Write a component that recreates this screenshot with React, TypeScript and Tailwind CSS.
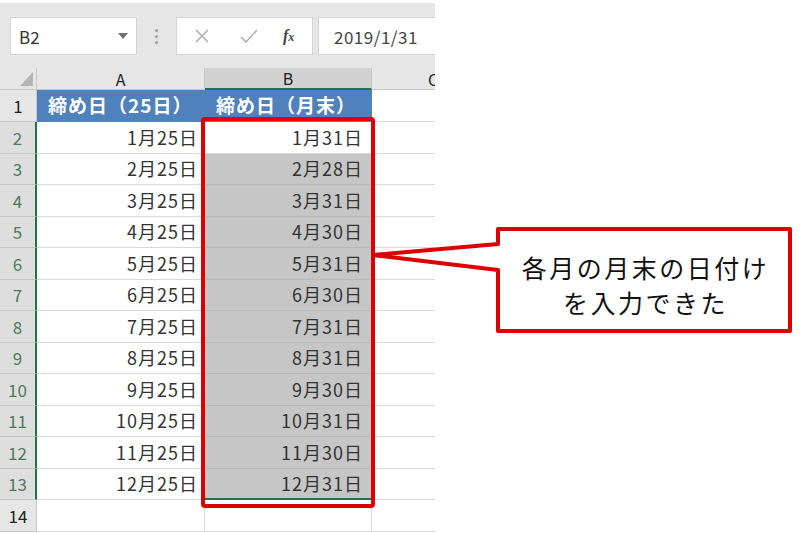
import React from "react";

const FONT = { fontFamily: '"Noto Sans CJK JP", "Noto Sans", sans-serif' };

const rowsA = ["1月25日","2月25日","3月25日","4月25日","5月25日","6月25日","7月25日","8月25日","9月25日","10月25日","11月25日","12月25日"];
const rowsB = ["1月31日","2月28日","3月31日","4月30日","5月31日","6月30日","7月31日","8月31日","9月30日","10月31日","11月30日","12月31日"];

export default function App() {
  return (
    <div className="relative w-[800px] h-[533px] overflow-hidden bg-white" style={FONT}>
      <div className="w-[435px] h-full flex flex-col">
        {/* toolbar */}
        <div className="h-[68px] bg-[#e6e6e6] border-t-[3px] border-white flex items-start pt-[14px] shrink-0">
          <div className="ml-[10px] w-[127px] h-[38px] bg-white border border-[#d4d4d4] flex items-center justify-between pl-[8px] pr-[8px]">
            <span className="text-[17px] text-[#333] leading-none">B2</span>
            <svg width="10" height="6" viewBox="0 0 10 6"><path d="M0 0 L10 0 L5 6 Z" fill="#707070" /></svg>
          </div>
          <div className="w-[39px] h-[38px] flex flex-col items-center justify-center gap-[3px]">
            <span className="w-[3px] h-[3px] rounded-full bg-[#a0a0a0]" />
            <span className="w-[3px] h-[3px] rounded-full bg-[#a0a0a0]" />
            <span className="w-[3px] h-[3px] rounded-full bg-[#a0a0a0]" />
          </div>
          <div className="w-[137px] h-[38px] bg-white border border-[#d4d4d4] flex items-center">
            <svg className="ml-[18px]" width="14" height="14" viewBox="0 0 14 14"><path d="M1 1 L13 13 M13 1 L1 13" stroke="#b0b0b0" strokeWidth="1.6" /></svg>
            <svg className="ml-[31px]" width="18" height="14" viewBox="0 0 18 14"><path d="M1 8 L6 13 L17 1" stroke="#b0b0b0" strokeWidth="1.6" fill="none" /></svg>
            <span className="ml-[25px] text-[16px] italic font-bold text-[#444] leading-none" style={{ fontFamily: '"Liberation Serif", serif' }}>f<span className="text-[12px]">x</span></span>
          </div>
          <div className="ml-[5px] flex-1 h-[38px] bg-white border border-r-0 border-[#d4d4d4] flex items-center pl-[15px]">
            <span className="text-[17px] text-[#444] leading-none tracking-[0.5px]">2019/1/31</span>
          </div>
        </div>
        {/* column headers */}
        <div className="h-[22px] flex shrink-0 text-[16px] text-[#222] leading-none">
          <div className="w-[37px] bg-[#e6e6e6] border-r border-b border-[#c8c8c8] flex items-end justify-end pr-[3px] pb-[3px]">
            <svg width="13" height="14" viewBox="0 0 13 14"><path d="M13 0 L13 14 L0 14 Z" fill="#b4b4b4" /></svg>
          </div>
          <div className="w-[168px] bg-[#e6e6e6] border-r border-b border-[#c8c8c8] flex items-center justify-center">A</div>
          <div className="w-[167px] bg-[#d2d2d2] border-r border-[#c8c8c8] border-b-2 border-b-[#217346] flex items-center justify-center">B</div>
          <div className="flex-1 bg-[#e6e6e6] border-b border-[#c8c8c8] overflow-hidden flex items-center">
            <span className="ml-[56px]">C</span>
          </div>
        </div>
        {/* row 1 */}
        <div className="h-[32px] flex shrink-0">
          <div className="w-[37px] bg-[#e6e6e6] border-r border-b border-[#c8c8c8] flex items-center justify-center text-[17px] text-[#222]">1</div>
          <div className="w-[168px] bg-[#4f81bd] border-b border-[#4f81bd] flex items-center pl-[11px] text-white font-bold text-[19px] tracking-[1px]">締め日（25日）</div>
          <div className="w-[167px] bg-[#4f81bd] border-b border-[#4f81bd] flex items-center pl-[11px] text-white font-bold text-[19px] tracking-[1px]">締め日（月末）</div>
          <div className="flex-1 border-b border-[#d9d9d9]" />
        </div>
        {/* rows 2-13 */}
        {rowsA.map((a, i) => (
          <div key={i} className="h-[31.5px] flex shrink-0">
            <div className="w-[37px] bg-[#dedede] border-r-2 border-r-[#217346] border-b border-b-[#c8c8c8] flex items-center justify-center text-[17px] text-[#4a7c5c]">{i + 2}</div>
            <div className="w-[168px] border-r border-b border-[#d9d9d9] flex items-center justify-end pr-[6px] text-[18px] tracking-[1px] text-[#333]">{a}</div>
            <div className={`w-[167px] border-r border-b flex items-center justify-end pr-[8px] text-[18px] tracking-[1px] text-[#333] ${i === 0 ? "bg-white border-[#d9d9d9]" : "bg-[#c6c6c6] border-[#b8b8b8]"} ${i === 11 ? "border-b-2 border-b-[#217346]" : ""}`}>{rowsB[i]}</div>
            <div className="flex-1 border-b border-[#d9d9d9]" />
          </div>
        ))}
        {/* row 14 */}
        <div className="h-[32px] flex shrink-0">
          <div className="w-[37px] bg-[#e6e6e6] border-r border-b border-[#c8c8c8] flex items-center justify-center text-[17px] text-[#222]">14</div>
          <div className="w-[168px] border-r border-b border-[#d9d9d9]" />
          <div className="w-[167px] border-r border-b border-[#d9d9d9]" />
          <div className="flex-1 border-b border-[#d9d9d9]" />
        </div>
      </div>

      {/* red selection frame */}
      <div className="absolute left-[201px] top-[117px] w-[174px] h-[391px] border-[4px] border-[#dd0000] rounded-[4px]" />

      {/* callout */}
      <svg className="absolute left-0 top-0" width="800" height="533" viewBox="0 0 800 533">
        <path
          d="M498 229 L790 229 L790 331 L498 331 L498 270 L373 255 L498 244 Z"
          fill="white"
          stroke="#dd0000"
          strokeWidth="4"
          strokeLinejoin="round"
        />
      </svg>
      <div className="absolute left-[498px] top-[229px] w-[292px] h-[102px] flex flex-col items-center justify-center pt-[9px] pl-[3px] text-[25px] leading-[35px] tracking-[2.5px] text-[#111]">
        <span>各月の月末の日付け</span>
        <span>を入力できた</span>
      </div>
    </div>
  );
}
